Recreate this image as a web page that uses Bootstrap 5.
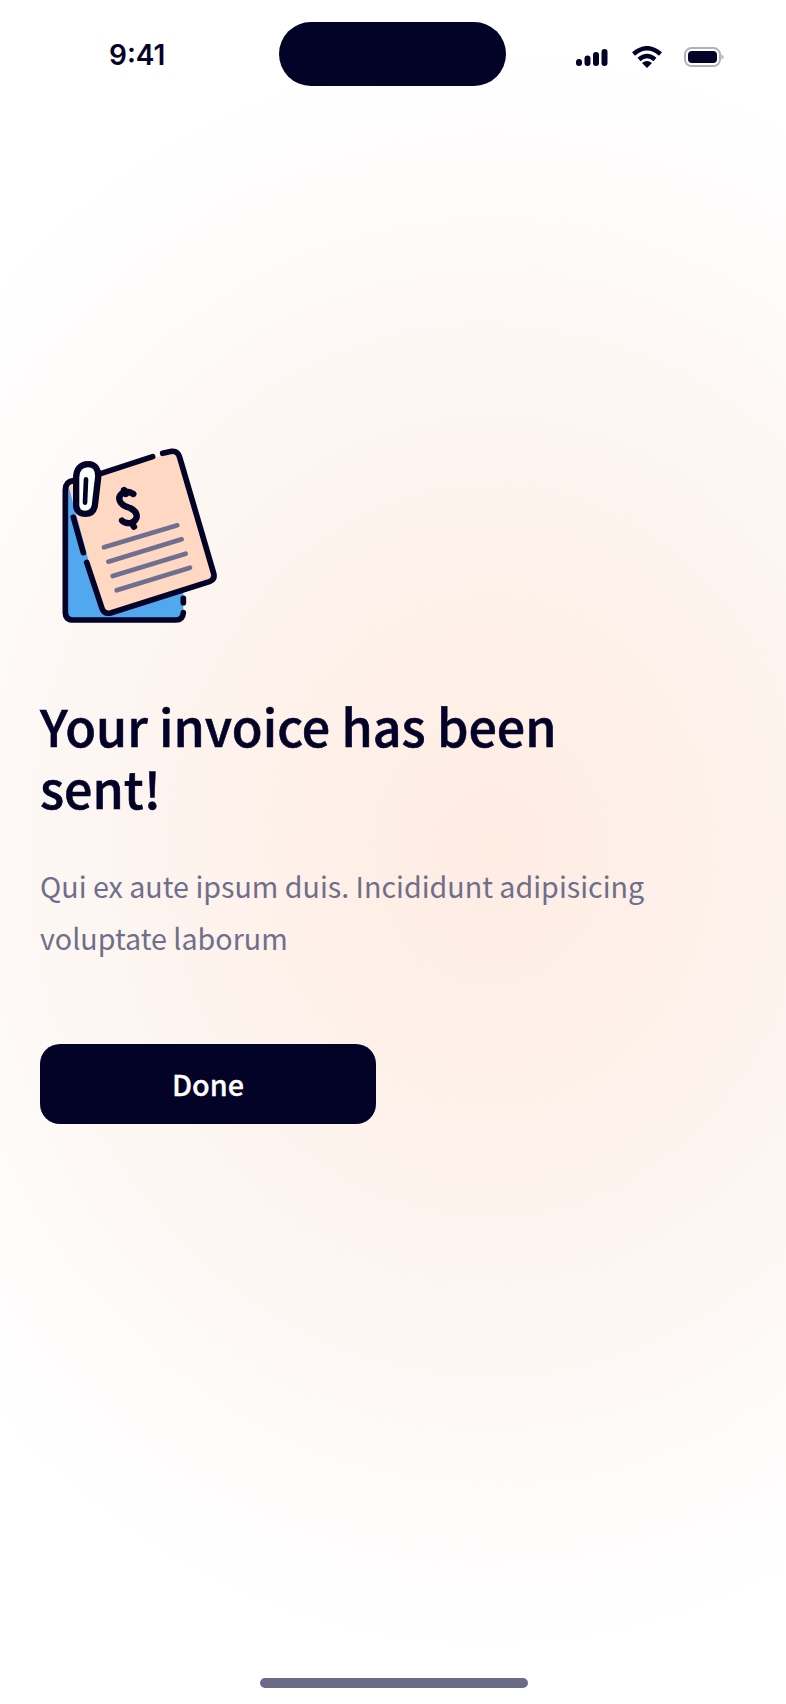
<!DOCTYPE html>
<html lang="en">
<head>
    <meta charset="UTF-8">
    <title>Invoice sent</title>
    <link href="https://cdn.jsdelivr.net/npm/bootstrap@5.3.3/dist/css/bootstrap.min.css" rel="stylesheet">
    <style>
        body {
            height: 1704px;
            overflow: hidden;
            color: #030227;
            font-family: "Noto Sans CJK JP", "Noto Sans", sans-serif;
            background-color: #fff;
            background-image: radial-gradient(ellipse 700px 800px at 490px 850px, #feece3 0%, #fef1ea 30%, #fdf6f2 58%, #fefbfa 80%, #ffffff 100%);
        }

        .status-row {
            height: 108px;
            padding: 22px 62px 0 109px;
        }

        .clock {
            font-family: Inter, sans-serif;
            font-size: 28px;
            font-weight: 600;
            line-height: 66px;
            width: 170px;
        }

        .island {
            width: 227px;
            height: 64px;
            border-radius: 32px;
            background: #030227;
        }

        .status-icons {
            height: 66px;
            padding-top: 4px;
            gap: 22px;
        }

        .signal-icon {
            margin-right: 2px;
        }

        .main-area {
            padding: 322px 40px 0;
        }

        .invoice-art {
            display: block;
            margin-bottom: 64px;
        }

        .page-title {
            font-size: 50.200px;
            font-weight: 500;
            -webkit-text-stroke: 0.6px #030227;
            line-height: 62px;
            margin: 0 0 42px;
            max-width: 600px;
        }

        .page-text {
            font-size: 28.650px;
            line-height: 52px;
            color: #6f6f8a;
            max-width: 640px;
            margin-bottom: 80px;
        }

        .btn-done {
            width: 336px;
            height: 80px;
            border-radius: 20px;
            background: #030227;
            color: #fff;
            font-size: 28.800px;
            font-weight: 500;
            -webkit-text-stroke: 0.3px #fff;
            border: 0;
        }

        .home-bar {
            width: 268px;
            height: 10px;
            border-radius: 5px;
            background: #6b6b87;
            bottom: 16px;
            left: 260px;
        }
    </style>
</head>
<body class="position-relative">
<div class="status-row d-flex align-items-start">
    <div class="clock">9:41</div>
    <div class="island"></div>
    <div class="status-icons d-flex align-items-center ms-auto">
        <svg class="signal-icon" width="32" height="17" viewBox="0 0 32 17">
            <rect x="0" y="10" width="6" height="7" rx="3" fill="#030227"/>
            <rect x="8.500" y="6.500" width="6" height="10.500" rx="3" fill="#030227"/>
            <rect x="17" y="3" width="6" height="14" rx="3" fill="#030227"/>
            <rect x="25.500" y="0" width="6" height="17" rx="3" fill="#030227"/>
        </svg>
        <svg width="30" height="22" viewBox="0 0 30 22">
            <path d="M1.500 8 Q15 -3.500 28.500 8" fill="none" stroke="#030227" stroke-width="4.500"/>
            <path d="M7 13.500 Q15 6.500 23 13.500" fill="none" stroke="#030227" stroke-width="4.500"/>
            <path d="M10 17 Q15 13 20 17 L15 22Z" fill="#030227"/>
        </svg>
        <svg width="40" height="20" viewBox="0 0 40 20">
            <rect x="1" y="1" width="35" height="18" rx="6.500" fill="none" stroke="#b0b0c0" stroke-width="2"/>
            <rect x="4" y="4" width="29" height="12" rx="4" fill="#030227"/>
            <path d="M37.500 7 L40 10 L37.500 13Z" fill="#b0b0c0"/>
        </svg>
    </div>
</div>

<div class="main-area">
    <svg class="invoice-art" width="190" height="200" viewBox="0 0 570 600">
        <path d="M100 150 H95 Q76 150 76 175 V545 Q76 570 100 570 H405 Q430 570 430 545 V200 H100Z" fill="#52a8ee"/>
        <path d="M85 165 L395 68 Q415 62 421 82 L522 430 Q527 448 510 455 L212 548 Q190 554 184 535Z" fill="#ffd8c4"/>
        <g fill="none" stroke="#030227" stroke-width="17" stroke-linecap="round">
            <path d="M100 152 Q76 155 76 180 V545 Q76 570 100 570 H408 Q428 570 430 548"/>
            <path d="M430 505 V518"/>
            <path d="M175 133 L338 80"/>
            <path d="M368 70 L395 64 Q413 62 419 82 L521 430 Q526 448 508 455 L212 549 Q192 553 186 535 L140 397"/>
            <path d="M130 368 L100 262"/>
            <path stroke-width="19" d="M280 192 Q262 180 246 190 Q232 202 242 218 Q252 230 270 234 Q292 244 290 262 Q282 284 256 278 Q248 276 246 272 M252 180 L258 192 M274 278 L282 290"/>
        </g>
        <path d="M118 226 V142 Q119 112 144 112 Q167 112 165 142 L155 226 Q152 242 136 242 Q118 242 118 226Z" fill="#fff" stroke="#030227" stroke-width="38" paint-order="stroke"/>
        <path d="M135 218 L138 148" stroke="#030227" stroke-width="14" stroke-linecap="round"/>
        <g stroke="#6f6f8f" stroke-width="14" stroke-linecap="round">
            <path d="M192 352 L412 286"/>
            <path d="M205 395 L425 328"/>
            <path d="M218 438 L437 371"/>
            <path d="M230 481 L450 413"/>
        </g>
    </svg>

    <h1 class="page-title">Your invoice has been sent!</h1>
    <p class="page-text">Qui ex aute ipsum duis. Incididunt adipisicing voluptate laborum</p>
    <button type="button" class="btn btn-done">Done</button>
</div>

<div class="home-bar position-absolute"></div>

<script src="https://cdn.jsdelivr.net/npm/bootstrap@5.3.3/dist/js/bootstrap.bundle.min.js"></script>
</body>
</html>
